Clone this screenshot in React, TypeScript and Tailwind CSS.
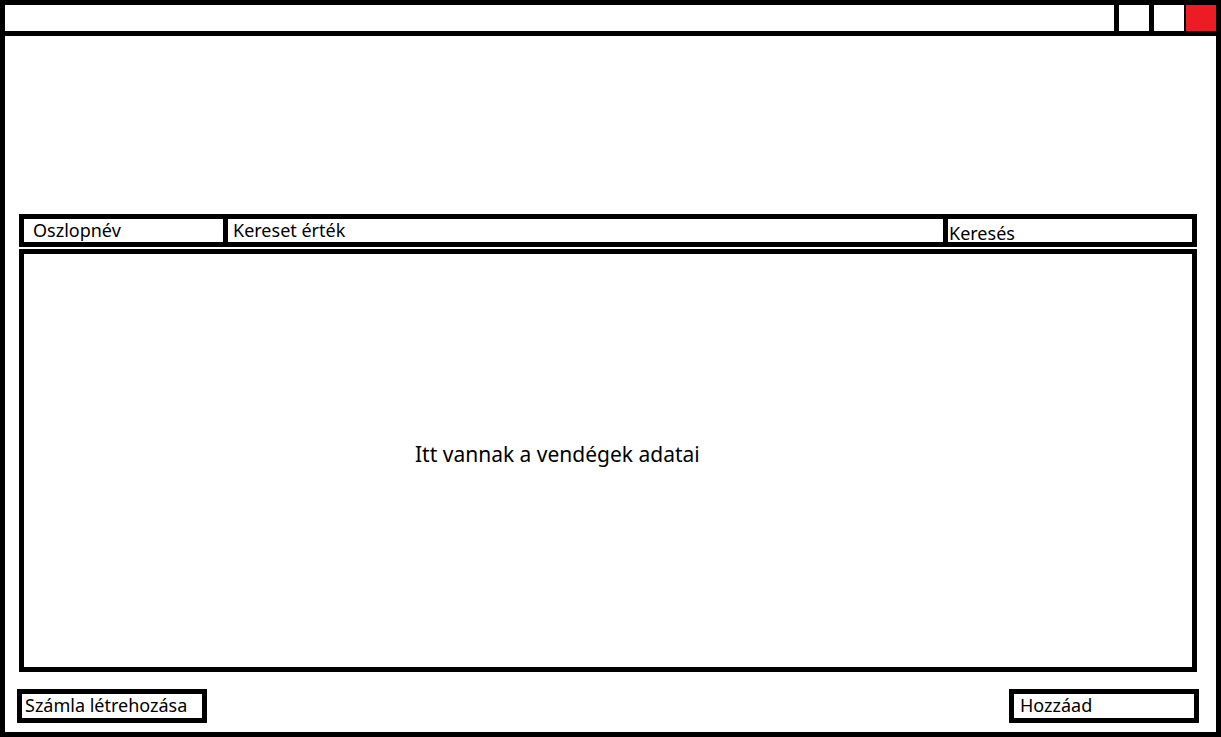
export default function App() {
  return (
    <div
      className="flex h-[737px] w-[1221px] flex-col border-[5px] border-black bg-white text-black"
      style={{ fontFamily: '"Noto Sans", "Open Sans", sans-serif' }}
    >
      {/* title bar */}
      <div className="flex h-[31px] shrink-0 justify-end border-b-[5px] border-black">
        <div className="w-[30px] border-l-[5px] border-black box-content" />
        <div className="w-[30px] border-l-[5px] border-black box-content" />
        <div className="w-[30px] border-l-[2px] border-black bg-[#ed1c24] box-content" />
      </div>

      <div className="flex flex-1 flex-col">
        {/* search row */}
        <div className="ml-[14px] mt-[178px] flex h-[33px] w-[1178px] border-[5px] border-black text-[18px] leading-none">
          <div className="flex w-[199px] items-center pl-[9px] pb-[2px]">Oszlopnév</div>
          <div className="flex w-[720px] items-center border-l-[5px] border-black pl-[5px] pb-[2px]">
            Kereset érték
          </div>
          <div className="flex flex-1 items-center border-l-[5px] border-black pl-px pt-[5px]">
            Keresés
          </div>
        </div>

        {/* table */}
        <div className="ml-[14px] mt-[2px] flex h-[423px] w-[1178px] items-center border-[5px] border-black pl-[391px] pb-[12px] text-[21px]">
          Itt vannak a vendégek adatai
        </div>

        {/* bottom buttons */}
        <div className="mt-[17px] flex justify-between pl-[12px] pr-[17px] text-[18px] leading-none">
          <div className="flex h-[34px] w-[190px] items-center border-[5px] border-black pl-[3px] pb-[3px]">
            Számla létrehozása
          </div>
          <div className="flex h-[34px] w-[190px] items-center border-[5px] border-black pl-[6px] pb-[3px]">
            Hozzáad
          </div>
        </div>
      </div>
    </div>
  );
}
